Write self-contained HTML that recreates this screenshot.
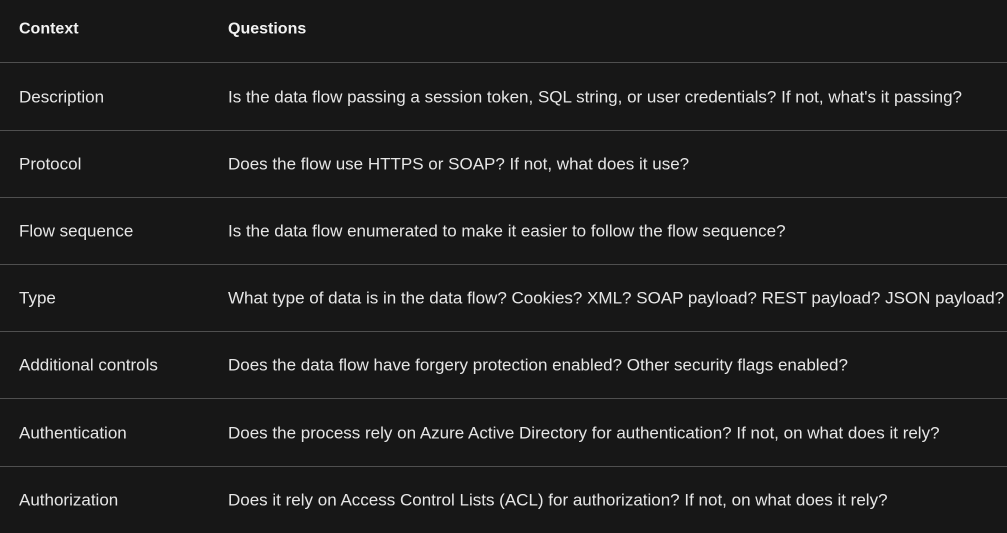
<!DOCTYPE html>
<html><head><meta charset="utf-8"><style>
html,body{margin:0;padding:0;background:#171717;width:1007px;height:528px;overflow:hidden}
body{font-family:"Liberation Sans",sans-serif;font-size:17px;color:#e6e6e6}
.row{position:absolute;left:0;width:1007px;height:67px;border-bottom:1px solid #4f4f4f}
.row span{position:absolute;top:50%;transform:translateY(-48%);white-space:nowrap}
.a{left:19px}.b{left:228px}
.h{font-weight:bold;color:#f2f2f2;font-size:16px}
</style></head><body>
<div class="row h" style="top:-5px"><span class="a">Context</span><span class="b">Questions</span></div>
<div class="row" style="top:63px"><span class="a">Description</span><span class="b">Is the data flow passing a session token, SQL string, or user credentials? If not, what's it passing?</span></div>
<div class="row" style="top:130px"><span class="a">Protocol</span><span class="b">Does the flow use HTTPS or SOAP? If not, what does it use?</span></div>
<div class="row" style="top:197px"><span class="a">Flow sequence</span><span class="b">Is the data flow enumerated to make it easier to follow the flow sequence?</span></div>
<div class="row" style="top:264px"><span class="a">Type</span><span class="b">What type of data is in the data flow? Cookies? XML? SOAP payload? REST payload? JSON payload?</span></div>
<div class="row" style="top:331px"><span class="a">Additional controls</span><span class="b">Does the data flow have forgery protection enabled? Other security flags enabled?</span></div>
<div class="row" style="top:399px"><span class="a">Authentication</span><span class="b">Does the process rely on Azure Active Directory for authentication? If not, on what does it rely?</span></div>
<div class="row" style="top:466px;border:none"><span class="a">Authorization</span><span class="b">Does it rely on Access Control Lists (ACL) for authorization? If not, on what does it rely?</span></div>
</body></html>
